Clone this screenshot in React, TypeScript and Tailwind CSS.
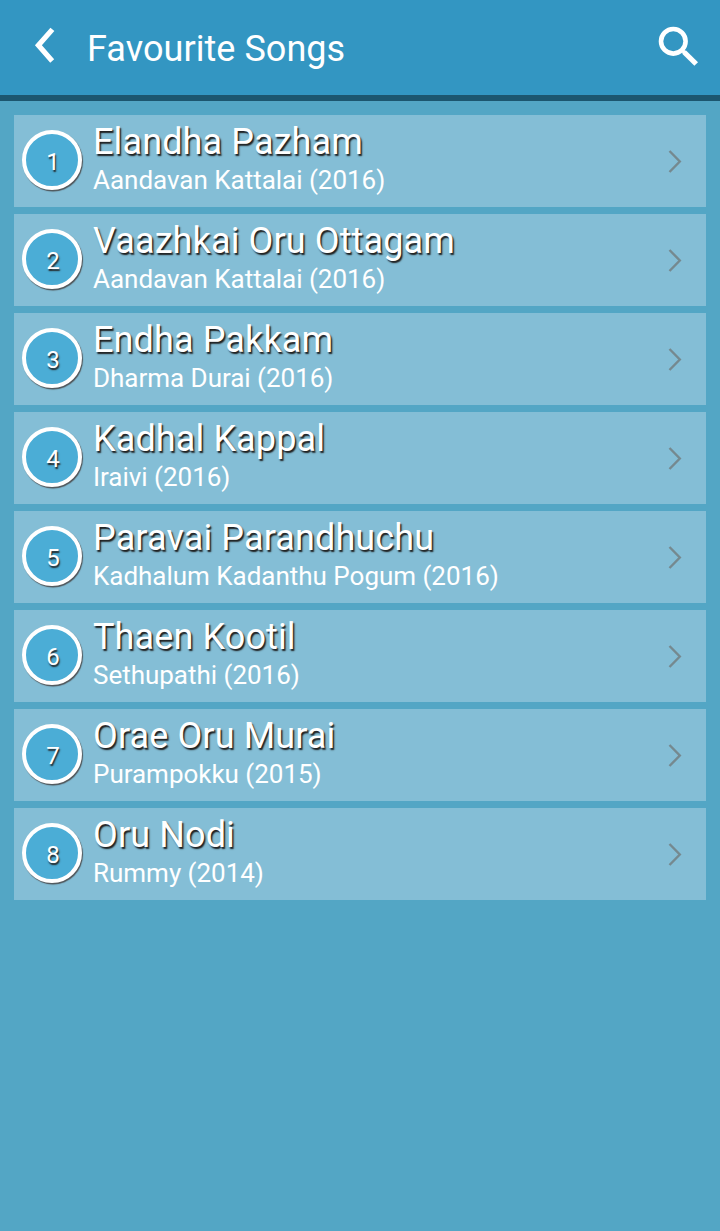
const songs = [
  { title: 'Elandha Pazham', movie: 'Aandavan Kattalai (2016)' },
  { title: 'Vaazhkai Oru Ottagam', movie: 'Aandavan Kattalai (2016)' },
  { title: 'Endha Pakkam', movie: 'Dharma Durai (2016)' },
  { title: 'Kadhal Kappal', movie: 'Iraivi (2016)' },
  { title: 'Paravai Parandhuchu', movie: 'Kadhalum Kadanthu Pogum (2016)' },
  { title: 'Thaen Kootil', movie: 'Sethupathi (2016)' },
  { title: 'Orae Oru Murai', movie: 'Purampokku (2015)' },
  { title: 'Oru Nodi', movie: 'Rummy (2014)' },
];

function Header() {
  return (
    <header className="flex h-[101px] items-start border-b-[6px] border-[#1c566f] bg-[#3396c2] pl-[34px] pr-[20px]">
      <button aria-label="Back" className="mt-[26px] h-[40px] w-[24px]">
        <svg viewBox="0 0 24 40" className="h-[40px] w-[24px]" fill="none">
          <path d="M18.4 3.4 L4.4 19.2 L18.2 35" stroke="white" strokeWidth="5.2" />
        </svg>
      </button>
      <h1 className="ml-[29px] mt-[28px] flex-1 text-[36px] leading-[42px] tracking-[0.05px] text-white">Favourite Songs</h1>
      <button aria-label="Search" className="mt-[25px] h-[44px] w-[44px]">
        <svg viewBox="0 0 44 44" className="h-[44px] w-[44px]" fill="none" stroke="white">
          <circle cx="17.3" cy="16.3" r="12.3" strokeWidth="4.6" />
          <path d="M28 27 L40.2 39" strokeWidth="5.2" />
          <path d="M25.5 24.5 L29 28" strokeWidth="3.6" />
        </svg>
      </button>
    </header>
  );
}

function SongRow({ index, title, movie }: { index: number; title: string; movie: string }) {
  return (
    <li className="flex h-[92px] items-start bg-[#84bed6] pl-[8px] pr-[23px]">
      <div className="mt-[15px] flex h-[60px] w-[60px] items-center justify-center rounded-full border-4 border-white bg-[#4badd6] pl-[2px] pt-[3px] text-[24px] leading-[28px] text-white shadow-[1px_1.5px_1px_#4f5559] [text-shadow:1px_1.5px_1.5px_#222]">
        {index}
      </div>
      <div className="ml-[11px] flex-1 whitespace-nowrap text-white">
        <div className="mt-[6px] text-[36px] leading-[42px] tracking-[0.12px] [text-shadow:1.5px_1.5px_1.5px_#1c1c1c]">{title}</div>
        <div className="mt-[2px] text-[26px] leading-[30px] tracking-[-0.02px]">{movie}</div>
      </div>
      <svg viewBox="0 0 16 26" className="mt-[33px] h-[26px] w-[16px]" fill="none">
        <path d="M2.5 3 L12.8 13.5 L2.5 24" stroke="#75898f" strokeWidth="2.4" />
      </svg>
    </li>
  );
}

export default function App() {
  return (
    <div className="min-h-[1231px] w-[720px] bg-[#53a6c5] font-['Roboto',sans-serif]">
      <Header />
      <ul className="flex flex-col gap-[7px] px-[14px] pt-[14px]">
        {songs.map((song, i) => (
          <SongRow key={song.title} index={i + 1} title={song.title} movie={song.movie} />
        ))}
      </ul>
    </div>
  );
}
